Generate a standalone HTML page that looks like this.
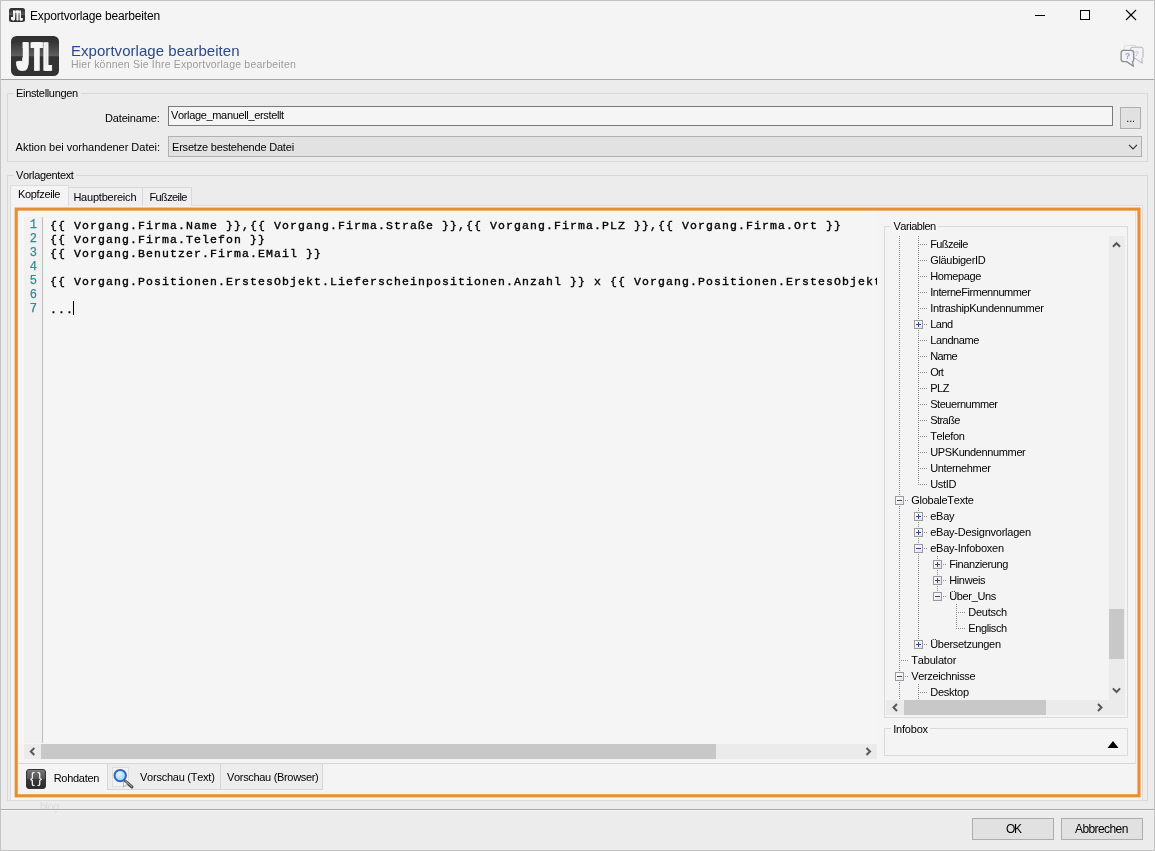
<!DOCTYPE html>
<html lang="de">
<head>
<meta charset="utf-8">
<title>Exportvorlage bearbeiten</title>
<style>
*{box-sizing:border-box;margin:0;padding:0}
html,body{width:1155px;height:851px;overflow:hidden}
body{position:relative;font-kerning:none;background:#ececec;font-family:"Liberation Sans",sans-serif;font-size:11px;color:#000;line-height:1}
div,span,svg{position:absolute}
#root{left:0;top:0;width:1155px;height:851px;will-change:transform}
#win{left:0;top:0;width:1155px;height:851px;border:1px solid #c3c3c3;z-index:50}
#head{left:0;top:0;width:1155px;height:79px;background:#f4f4f4}
#headline{left:0;top:79px;width:1154px;height:1px;background:#a6a6a6}
#title{left:30px;top:9px;font-size:12px;line-height:14px;white-space:nowrap;letter-spacing:-0.17px}
#h1{left:71px;top:42px;font-size:15px;line-height:17px;color:#2c4a8c;white-space:nowrap;letter-spacing:0.04px}
#h2{left:71px;top:58px;font-size:10.5px;line-height:12px;color:#9c9c9c;white-space:nowrap;letter-spacing:0.2px}
.t{white-space:nowrap;line-height:13px;font-size:11px;letter-spacing:-0.1px}
.gb{border:1px solid #d8d8d8}
.gbl{background:#ececec;padding:0 1px;white-space:nowrap;line-height:13px;letter-spacing:-0.1px}
.ln{font-family:"Liberation Mono",monospace;font-size:12px;line-height:14px;color:#2b8f93;-webkit-text-stroke:0.25px #2b8f93;text-align:right;white-space:pre}
.cd{font-family:"Liberation Mono",monospace;font-size:11.5px;letter-spacing:1.1px;line-height:14px;color:#000;white-space:pre;-webkit-text-stroke:0.35px #000}
.vd{width:1px;background:repeating-linear-gradient(to bottom,#8c8c8c 0 1px,transparent 1px 2px)}
.hd{height:1px;background:repeating-linear-gradient(to right,#8c8c8c 0 1px,transparent 1px 2px)}
.bx{width:9px;height:9px;border:1px solid #9b9b9b;background:linear-gradient(135deg,#fff,#e4e4e4)}
.bx i{position:absolute;background:#33478f}
.bh{left:1px;top:3px;width:5px;height:1px}
.bv{left:3px;top:1px;width:1px;height:5px}
.btn{background:#e1e1e1;border:1px solid #adadad;text-align:center;white-space:nowrap}
</style>
</head>
<body>
<div id="root">
<div id="head"></div><div id="headline"></div>
<div id="title">Exportvorlage bearbeiten</div>
<div id="h1">Exportvorlage bearbeiten</div>
<div id="h2">Hier können Sie Ihre Exportvorlage bearbeiten</div>
<svg style="left:11px;top:36px" width="48" height="40" viewBox="0 0 48 40">
<defs><linearGradient id="ag" x1="0" y1="0" x2="0" y2="1"><stop offset="0" stop-color="#2f2f2f"/><stop offset="0.15" stop-color="#343434"/><stop offset="0.49" stop-color="#5e5e5e"/><stop offset="0.52" stop-color="#333333"/><stop offset="1" stop-color="#323232"/></linearGradient><clipPath id="jc1"><path d="M11.8 0H48V40H0V21.5H11.8z"/></clipPath></defs>
<rect x="0" y="0" width="48" height="40" rx="5.5" ry="5.5" fill="url(#ag)"/>
<g clip-path="url(#jc1)">
<text transform="translate(5.11,33.70) scale(0.00940,0.01938)" font-family="Liberation Sans, sans-serif" font-weight="bold" font-size="2048" fill="#f5f5f5" stroke="#f5f5f5" stroke-width="1.0" style="vector-effect:non-scaling-stroke">J</text>
<text transform="translate(6.61,33.70) scale(0.00940,0.01938)" font-family="Liberation Sans, sans-serif" font-weight="bold" font-size="2048" fill="#f5f5f5" stroke="#f5f5f5" stroke-width="1.0" style="vector-effect:non-scaling-stroke">J</text>
<text transform="translate(8.11,33.70) scale(0.00940,0.01938)" font-family="Liberation Sans, sans-serif" font-weight="bold" font-size="2048" fill="#f5f5f5" stroke="#f5f5f5" stroke-width="1.0" style="vector-effect:non-scaling-stroke">J</text>
</g>
<text transform="translate(19.63,33.70) scale(0.00730,0.01938)" font-family="Liberation Sans, sans-serif" font-weight="bold" font-size="2048" fill="#f5f5f5" stroke="#f5f5f5" stroke-width="1.0" style="vector-effect:non-scaling-stroke">T</text>
<text transform="translate(21.13,33.70) scale(0.00730,0.01938)" font-family="Liberation Sans, sans-serif" font-weight="bold" font-size="2048" fill="#f5f5f5" stroke="#f5f5f5" stroke-width="1.0" style="vector-effect:non-scaling-stroke">T</text>
<text transform="translate(22.63,33.70) scale(0.00730,0.01938)" font-family="Liberation Sans, sans-serif" font-weight="bold" font-size="2048" fill="#f5f5f5" stroke="#f5f5f5" stroke-width="1.0" style="vector-effect:non-scaling-stroke">T</text>
<text transform="translate(31.92,33.70) scale(0.00495,0.01938)" font-family="Liberation Sans, sans-serif" font-weight="bold" font-size="2048" fill="#f5f5f5" stroke="#f5f5f5" stroke-width="1.0" style="vector-effect:non-scaling-stroke">L</text>
<text transform="translate(33.42,33.70) scale(0.00495,0.01938)" font-family="Liberation Sans, sans-serif" font-weight="bold" font-size="2048" fill="#f5f5f5" stroke="#f5f5f5" stroke-width="1.0" style="vector-effect:non-scaling-stroke">L</text>
<text transform="translate(34.92,33.70) scale(0.00495,0.01938)" font-family="Liberation Sans, sans-serif" font-weight="bold" font-size="2048" fill="#f5f5f5" stroke="#f5f5f5" stroke-width="1.0" style="vector-effect:non-scaling-stroke">L</text>
</svg>
<svg style="left:9px;top:8px" width="16" height="14" viewBox="0 0 16 14">
<defs><linearGradient id="bg" x1="0" y1="0" x2="0" y2="1"><stop offset="0" stop-color="#2f2f2f"/><stop offset="0.15" stop-color="#343434"/><stop offset="0.49" stop-color="#5e5e5e"/><stop offset="0.52" stop-color="#333333"/><stop offset="1" stop-color="#323232"/></linearGradient><clipPath id="jc2"><path d="M4.2 0H16V14H0V7.5H4.2z"/></clipPath></defs>
<rect x="0" y="0" width="16" height="14" rx="2.5" ry="2.5" fill="url(#bg)"/>
<g clip-path="url(#jc2)">
<text transform="translate(1.89,11.60) scale(0.00351,0.00646)" font-family="Liberation Sans, sans-serif" font-weight="bold" font-size="2048" fill="#f5f5f5" stroke="#f5f5f5" stroke-width="0.4" style="vector-effect:non-scaling-stroke">J</text>
<text transform="translate(2.19,11.60) scale(0.00351,0.00646)" font-family="Liberation Sans, sans-serif" font-weight="bold" font-size="2048" fill="#f5f5f5" stroke="#f5f5f5" stroke-width="0.4" style="vector-effect:non-scaling-stroke">J</text>
<text transform="translate(2.49,11.60) scale(0.00351,0.00646)" font-family="Liberation Sans, sans-serif" font-weight="bold" font-size="2048" fill="#f5f5f5" stroke="#f5f5f5" stroke-width="0.4" style="vector-effect:non-scaling-stroke">J</text>
</g>
<text transform="translate(6.54,11.60) scale(0.00265,0.00646)" font-family="Liberation Sans, sans-serif" font-weight="bold" font-size="2048" fill="#f5f5f5" stroke="#f5f5f5" stroke-width="0.4" style="vector-effect:non-scaling-stroke">T</text>
<text transform="translate(6.84,11.60) scale(0.00265,0.00646)" font-family="Liberation Sans, sans-serif" font-weight="bold" font-size="2048" fill="#f5f5f5" stroke="#f5f5f5" stroke-width="0.4" style="vector-effect:non-scaling-stroke">T</text>
<text transform="translate(7.14,11.60) scale(0.00265,0.00646)" font-family="Liberation Sans, sans-serif" font-weight="bold" font-size="2048" fill="#f5f5f5" stroke="#f5f5f5" stroke-width="0.4" style="vector-effect:non-scaling-stroke">T</text>
<text transform="translate(10.51,11.60) scale(0.00209,0.00646)" font-family="Liberation Sans, sans-serif" font-weight="bold" font-size="2048" fill="#f5f5f5" stroke="#f5f5f5" stroke-width="0.4" style="vector-effect:non-scaling-stroke">L</text>
<text transform="translate(10.81,11.60) scale(0.00209,0.00646)" font-family="Liberation Sans, sans-serif" font-weight="bold" font-size="2048" fill="#f5f5f5" stroke="#f5f5f5" stroke-width="0.4" style="vector-effect:non-scaling-stroke">L</text>
<text transform="translate(11.11,11.60) scale(0.00209,0.00646)" font-family="Liberation Sans, sans-serif" font-weight="bold" font-size="2048" fill="#f5f5f5" stroke="#f5f5f5" stroke-width="0.4" style="vector-effect:non-scaling-stroke">L</text>
</svg>
<svg style="left:1030px;top:5px" width="115" height="22" viewBox="0 0 115 22" fill="none" stroke="#000" stroke-width="1">
<path d="M5 10.5H15"/>
<rect x="50.5" y="5.5" width="9" height="9"/>
<path d="M96 5L106 15M106 5L96 15" stroke-width="1.1"/>
</svg>
<svg style="left:1119px;top:44px" width="26" height="24" viewBox="0 0 26 24">
<path d="M5 6V3.500Q5 1.400 7.200 1.400H15Q17 1.400 17.200 3" fill="#f3f4f6" stroke="#d6d6d6" stroke-width="0.9"/>
<path d="M13.6 3.200H21.800Q24.100 3.200 24.100 5.500V12.300Q24.100 14 22.800 14.200L23.200 19.300L16 14.200H13.600Q11.500 14.200 11.500 12V5.400Q11.500 3.200 13.600 3.200Z" fill="#f1f3f6" stroke="#b4b4b4" stroke-width="1"/>
<path d="M4.500 6.300H12.300Q14.700 6.300 14.700 8.700V15.400Q14.700 17.300 13.500 17.600L14.400 22.300L7.600 17.600H4.500Q2.100 17.600 2.100 15.200V8.700Q2.100 6.300 4.500 6.300Z" fill="#f0f2f5" stroke="#8e8e8e" stroke-width="1.300" stroke-linejoin="round"/>
<text x="8.700" y="14.800" text-anchor="middle" font-family="Liberation Sans, sans-serif" font-size="8.500" font-weight="bold" fill="#8aa2c8">?</text>
<text x="17.700" y="11.600" text-anchor="middle" font-family="Liberation Sans, sans-serif" font-size="8" font-weight="bold" fill="#bccbe0">?</text>
</svg>
<div class="gb" style="left:7px;top:93px;width:1141px;height:69px"></div>
<div class="gbl" style="left:14px;top:87px;width:67px;height:13px"></div>
<div class="t" style="left:16px;top:87px;font-size:11px;line-height:13px;letter-spacing:-0.324px;">Einstellungen</div>
<div class="t" style="left:105px;top:112px;font-size:11px;line-height:13px;letter-spacing:-0.163px;">Dateiname:</div>
<div style="left:168px;top:106px;width:945px;height:20px;background:#f5f5f5;border:1px solid #7a7a7a"></div>
<div class="t" style="left:171px;top:109px;font-size:11px;line-height:13px;letter-spacing:-0.343px;">Vorlage_manuell_erstellt</div>
<div class="btn" style="left:1120px;top:107px;width:21px;height:22px"></div>
<div class="t" style="left:1126.3px;top:112px;font-size:11px;line-height:13px;letter-spacing:-0.147px;">...</div>
<div class="t" style="left:15.6px;top:141px;font-size:11px;line-height:13px;letter-spacing:-0.018px;">Aktion bei vorhandener Datei:</div>
<div style="left:168px;top:136px;width:974px;height:21px;background:#e2e2e2;border:1px solid #b0b0b0"></div>
<div class="t" style="left:172px;top:141px;font-size:11px;line-height:13px;letter-spacing:-0.195px;">Ersetze bestehende Datei</div>
<svg style="left:1127px;top:143px" width="12" height="8" viewBox="0 0 12 8" fill="none" stroke="#333" stroke-width="1.2"><path d="M2 1.800L6 5.800L10 1.800"/></svg>
<div class="gb" style="left:7px;top:175px;width:1141px;height:626px"></div>
<div class="gbl" style="left:14px;top:169px;width:62px;height:13px"></div>
<div class="t" style="left:16px;top:169px;font-size:11px;line-height:13px;letter-spacing:-0.353px;">Vorlagentext</div>
<div style="left:10px;top:205px;width:1133px;height:596px;background:#f4f4f4;border:1px solid #dcdcdc"></div>
<div style="left:68px;top:187px;width:75px;height:19px;background:#efefef;border:1px solid #d9d9d9;border-bottom:none"></div>
<div style="left:142px;top:187px;width:50px;height:19px;background:#efefef;border:1px solid #d9d9d9;border-bottom:none"></div>
<div style="left:10px;top:185px;width:59px;height:21px;background:#f4f4f4;border:1px solid #dcdcdc;border-bottom:none"></div>
<div class="t" style="left:18px;top:188px;font-size:11px;line-height:13px;letter-spacing:-0.347px;">Kopfzeile</div>
<div class="t" style="left:73.4px;top:191px;font-size:11px;line-height:13px;letter-spacing:-0.211px;">Hauptbereich</div>
<div class="t" style="left:149.4px;top:191px;font-size:11px;line-height:13px;letter-spacing:-0.597px;">Fußzeile</div>
<svg style="left:10px;top:203px" width="1136" height="600" viewBox="10 203 1136 600" fill="none"><rect x="16.2" y="209.1" width="1122.8" height="586.7" stroke="#fdf0e1" stroke-width="5"/><rect x="16.2" y="209.1" width="1122.8" height="586.7" stroke="#e78d35" stroke-width="3.1"/></svg>
<div style="left:18px;top:211px;width:859px;height:533px;overflow:hidden;background:#f5f5f5">
<div style="left:6px;top:6px;width:18px;height:526px;background:#f1f1f1"></div>
<div style="left:24px;top:6px;width:1px;height:526px;background:#bdbdbd"></div>
<div class="ln" style="left:0;top:7px;width:19px">1</div><div class="cd" style="left:32px;top:8px">{{ Vorgang.Firma.Name }},{{ Vorgang.Firma.Straße }},{{ Vorgang.Firma.PLZ }},{{ Vorgang.Firma.Ort }}</div>
<div class="ln" style="left:0;top:21px;width:19px">2</div><div class="cd" style="left:32px;top:22px">{{ Vorgang.Firma.Telefon }}</div>
<div class="ln" style="left:0;top:35px;width:19px">3</div><div class="cd" style="left:32px;top:36px">{{ Vorgang.Benutzer.Firma.EMail }}</div>
<div class="ln" style="left:0;top:49px;width:19px">4</div>
<div class="ln" style="left:0;top:63px;width:19px">5</div><div class="cd" style="left:32px;top:64px">{{ Vorgang.Positionen.ErstesObjekt.Lieferscheinpositionen.Anzahl }} x {{ Vorgang.Positionen.ErstesObjekt.Artikel.Name }}</div>
<div class="ln" style="left:0;top:77px;width:19px">6</div>
<div class="ln" style="left:0;top:91px;width:19px">7</div><div class="cd" style="left:32px;top:92px">...</div>
<div style="left:55px;top:90px;width:1px;height:14px;background:#000"></div>
</div>
<div style="left:24px;top:744px;width:853px;height:15px;background:#ebebeb"></div>
<div style="left:41px;top:744px;width:675px;height:15px;background:#c8c8c8"></div>
<svg style="left:24px;top:744px" width="17" height="15" viewBox="0 0 17 15" fill="none" stroke="#585858" stroke-width="2"><path d="M10.300 4L6.800 7.500L10.300 11"/></svg>
<svg style="left:860px;top:744px" width="17" height="15" viewBox="0 0 17 15" fill="none" stroke="#585858" stroke-width="2"><path d="M6.500 4L10 7.500L6.500 11"/></svg>
<div class="gb" style="left:884px;top:226px;width:244px;height:492px;border-color:#dadada"></div>
<div style="left:891px;top:220px;width:47px;height:13px;background:#f5f5f5"></div>
<div class="t" style="left:893.4px;top:220px;font-size:11px;line-height:13px;letter-spacing:-0.456px;">Variablen</div>
<div style="left:888px;top:236px;width:220px;height:464px;overflow:hidden">
<div class="vd" style="left:11px;top:0px;height:464px"></div><div class="vd" style="left:30px;top:0px;height:249px"></div><div class="vd" style="left:30px;top:272px;height:137px"></div><div class="vd" style="left:30px;top:448px;height:16px"></div><div class="vd" style="left:49px;top:320px;height:41px"></div><div class="vd" style="left:68px;top:368px;height:25px"></div>
<div class="hd" style="left:32px;top:8px;width:7px"></div><div class="t" style="left:42.2px;top:2px;font-size:11px;line-height:13px;letter-spacing:-0.584px;">Fußzeile</div>
<div class="hd" style="left:32px;top:24px;width:7px"></div><div class="t" style="left:42.2px;top:18px;font-size:11px;line-height:13px;letter-spacing:-0.323px;">GläubigerID</div>
<div class="hd" style="left:32px;top:40px;width:7px"></div><div class="t" style="left:42.2px;top:34px;font-size:11px;line-height:13px;letter-spacing:-0.362px;">Homepage</div>
<div class="hd" style="left:32px;top:56px;width:7px"></div><div class="t" style="left:42.2px;top:50px;font-size:11px;line-height:13px;letter-spacing:-0.455px;">InterneFirmennummer</div>
<div class="hd" style="left:32px;top:72px;width:7px"></div><div class="t" style="left:42.2px;top:66px;font-size:11px;line-height:13px;letter-spacing:-0.339px;">IntrashipKundennummer</div>
<div class="hd" style="left:32px;top:88px;width:7px"></div><div class="bx" style="left:26px;top:84px"><i class="bh"></i><i class="bv"></i></div><div class="t" style="left:42.2px;top:82px;font-size:11px;line-height:13px;letter-spacing:-0.506px;">Land</div>
<div class="hd" style="left:32px;top:104px;width:7px"></div><div class="t" style="left:42.2px;top:98px;font-size:11px;line-height:13px;letter-spacing:-0.385px;">Landname</div>
<div class="hd" style="left:32px;top:120px;width:7px"></div><div class="t" style="left:42.2px;top:114px;font-size:11px;line-height:13px;letter-spacing:-0.669px;">Name</div>
<div class="hd" style="left:32px;top:136px;width:7px"></div><div class="t" style="left:42.2px;top:130px;font-size:11px;line-height:13px;letter-spacing:-0.830px;">Ort</div>
<div class="hd" style="left:32px;top:152px;width:7px"></div><div class="t" style="left:42.2px;top:146px;font-size:11px;line-height:13px;letter-spacing:-0.430px;">PLZ</div>
<div class="hd" style="left:32px;top:168px;width:7px"></div><div class="t" style="left:42.2px;top:162px;font-size:11px;line-height:13px;letter-spacing:-0.448px;">Steuernummer</div>
<div class="hd" style="left:32px;top:184px;width:7px"></div><div class="t" style="left:42.2px;top:178px;font-size:11px;line-height:13px;letter-spacing:-0.547px;">Straße</div>
<div class="hd" style="left:32px;top:200px;width:7px"></div><div class="t" style="left:42.2px;top:194px;font-size:11px;line-height:13px;letter-spacing:-0.352px;">Telefon</div>
<div class="hd" style="left:32px;top:216px;width:7px"></div><div class="t" style="left:42.2px;top:210px;font-size:11px;line-height:13px;letter-spacing:-0.378px;">UPSKundennummer</div>
<div class="hd" style="left:32px;top:232px;width:7px"></div><div class="t" style="left:42.2px;top:226px;font-size:11px;line-height:13px;letter-spacing:-0.352px;">Unternehmer</div>
<div class="hd" style="left:32px;top:248px;width:7px"></div><div class="t" style="left:42.2px;top:242px;font-size:11px;line-height:13px;letter-spacing:-0.333px;">UstID</div>
<div class="hd" style="left:13px;top:264px;width:7px"></div><div class="bx" style="left:7px;top:260px"><i class="bh"></i></div><div class="t" style="left:23.2px;top:258px;font-size:11px;line-height:13px;letter-spacing:-0.254px;">GlobaleTexte</div>
<div class="hd" style="left:32px;top:280px;width:7px"></div><div class="bx" style="left:26px;top:276px"><i class="bh"></i><i class="bv"></i></div><div class="t" style="left:42.2px;top:274px;font-size:11px;line-height:13px;letter-spacing:-0.221px;">eBay</div>
<div class="hd" style="left:32px;top:296px;width:7px"></div><div class="bx" style="left:26px;top:292px"><i class="bh"></i><i class="bv"></i></div><div class="t" style="left:42.2px;top:290px;font-size:11px;line-height:13px;letter-spacing:-0.242px;">eBay-Designvorlagen</div>
<div class="hd" style="left:32px;top:312px;width:7px"></div><div class="bx" style="left:26px;top:308px"><i class="bh"></i></div><div class="t" style="left:42.2px;top:306px;font-size:11px;line-height:13px;letter-spacing:-0.248px;">eBay-Infoboxen</div>
<div class="hd" style="left:51px;top:328px;width:7px"></div><div class="bx" style="left:45px;top:324px"><i class="bh"></i><i class="bv"></i></div><div class="t" style="left:61.2px;top:322px;font-size:11px;line-height:13px;letter-spacing:-0.408px;">Finanzierung</div>
<div class="hd" style="left:51px;top:344px;width:7px"></div><div class="bx" style="left:45px;top:340px"><i class="bh"></i><i class="bv"></i></div><div class="t" style="left:61.2px;top:338px;font-size:11px;line-height:13px;letter-spacing:-0.355px;">Hinweis</div>
<div class="hd" style="left:51px;top:360px;width:7px"></div><div class="bx" style="left:45px;top:356px"><i class="bh"></i></div><div class="t" style="left:61.2px;top:354px;font-size:11px;line-height:13px;letter-spacing:-0.336px;">Über_Uns</div>
<div class="hd" style="left:70px;top:376px;width:7px"></div><div class="t" style="left:80.2px;top:370px;font-size:11px;line-height:13px;letter-spacing:-0.239px;">Deutsch</div>
<div class="hd" style="left:70px;top:392px;width:7px"></div><div class="t" style="left:80.2px;top:386px;font-size:11px;line-height:13px;letter-spacing:-0.370px;">Englisch</div>
<div class="hd" style="left:32px;top:408px;width:7px"></div><div class="bx" style="left:26px;top:404px"><i class="bh"></i><i class="bv"></i></div><div class="t" style="left:42.2px;top:402px;font-size:11px;line-height:13px;letter-spacing:-0.312px;">Übersetzungen</div>
<div class="hd" style="left:13px;top:424px;width:7px"></div><div class="t" style="left:23.2px;top:418px;font-size:11px;line-height:13px;letter-spacing:-0.161px;">Tabulator</div>
<div class="hd" style="left:13px;top:440px;width:7px"></div><div class="bx" style="left:7px;top:436px"><i class="bh"></i></div><div class="t" style="left:23.2px;top:434px;font-size:11px;line-height:13px;letter-spacing:-0.342px;">Verzeichnisse</div>
<div class="hd" style="left:32px;top:456px;width:7px"></div><div class="t" style="left:42.2px;top:450px;font-size:11px;line-height:13px;letter-spacing:-0.239px;">Desktop</div>
</div>
<div style="left:1109px;top:236px;width:16px;height:479px;background:#ebebeb"></div>
<div style="left:1109px;top:609px;width:15px;height:50px;background:#c8c8c8"></div>
<svg style="left:1108px;top:236px" width="17" height="17" viewBox="0 0 17 17" fill="none" stroke="#585858" stroke-width="2"><path d="M4.900 10.800L8.500 7.200L12.100 10.800"/></svg>
<svg style="left:1108px;top:682px" width="17" height="17" viewBox="0 0 17 17" fill="none" stroke="#585858" stroke-width="2"><path d="M4.900 6.400L8.500 10L12.100 6.400"/></svg>
<div style="left:886px;top:700px;width:223px;height:15px;background:#ebebeb"></div>
<div style="left:904px;top:700px;width:142px;height:15px;background:#c8c8c8"></div>
<svg style="left:888px;top:700px" width="16" height="15" viewBox="0 0 16 15" fill="none" stroke="#585858" stroke-width="2"><path d="M9 4L5.500 7.500L9 11"/></svg>
<svg style="left:1091px;top:700px" width="17" height="15" viewBox="0 0 17 15" fill="none" stroke="#585858" stroke-width="2"><path d="M7 4L10.500 7.500L7 11"/></svg>
<div class="gb" style="left:884px;top:728px;width:244px;height:28px;border-color:#dadada"></div>
<div style="left:891px;top:722px;width:39px;height:13px;background:#f5f5f5"></div>
<div class="t" style="left:893.2px;top:723px;font-size:11px;line-height:13px;letter-spacing:-0.197px;">Infobox</div>
<svg style="left:1107px;top:740px" width="12" height="9" viewBox="0 0 12 9"><path d="M0.5 8L6 1L11.500 8z" fill="#000"/></svg>
<div style="left:18px;top:763px;width:1118px;height:1px;background:#d6d6d6"></div>
<div style="left:1135px;top:211px;width:1px;height:553px;background:#e4e0de"></div>
<div style="left:107px;top:763px;width:114px;height:27px;background:#ededed;border:1px solid #d6d6d6"></div>
<div style="left:220px;top:763px;width:103px;height:27px;background:#ededed;border:1px solid #d6d6d6"></div>
<div class="t" style="left:53.7px;top:772px;font-size:11px;line-height:13px;letter-spacing:-0.294px;">Rohdaten</div>
<div class="t" style="left:140px;top:771px;font-size:11px;line-height:13px;letter-spacing:-0.245px;">Vorschau (Text)</div>
<div class="t" style="left:227px;top:771px;font-size:11px;line-height:13px;letter-spacing:-0.320px;">Vorschau (Browser)</div>
<svg style="left:26px;top:769px" width="20" height="20" viewBox="0 0 20 20">
<defs><linearGradient id="rg" x1="0" y1="0" x2="0" y2="1"><stop offset="0" stop-color="#8a8a8a"/><stop offset="0.12" stop-color="#6e6e6e"/><stop offset="0.48" stop-color="#555"/><stop offset="0.52" stop-color="#3a3a3a"/><stop offset="1" stop-color="#2a2a2a"/></linearGradient></defs>
<rect x="0.5" y="0.5" width="19" height="19" rx="2.5" fill="url(#rg)" stroke="#333"/>
<text x="6.3" y="14.3" text-anchor="middle" font-family="Liberation Sans, sans-serif" font-size="14.5" fill="#f4f4f4">{</text>
<text x="13.7" y="14.3" text-anchor="middle" font-family="Liberation Sans, sans-serif" font-size="14.5" fill="#f4f4f4">}</text>
</svg>
<svg style="left:111px;top:765px" width="25" height="25" viewBox="0 0 25 25">
<defs><radialGradient id="mg" cx="0.4" cy="0.35" r="0.7"><stop offset="0" stop-color="#dff5fd"/><stop offset="1" stop-color="#8fd2f2"/></radialGradient></defs>
<rect x="1.5" y="2.5" width="16" height="19" fill="#f3f3f3" stroke="#dedede"/>
<path d="M14 16L21 22" stroke="#4f4f4f" stroke-width="3" stroke-linecap="round"/>
<path d="M14 15.600L21 21.600" stroke="#a8a8a8" stroke-width="1" stroke-linecap="round"/>
<circle cx="9.2" cy="10.600" r="5.7" fill="url(#mg)" stroke="#3565bd" stroke-width="2"/>
<path d="M12.5 16.500l0 5.500 4-3z" fill="#f6f6f6" stroke="#909090" stroke-width="0.600"/>
</svg>
<div class="t" style="left:40px;top:800px;font-size:11px;line-height:13px;letter-spacing:-0.513px;color:#dcdcdc;">blog</div>
<div style="left:1px;top:809px;width:1153px;height:1px;background:#a9a9a9"></div>
<div style="left:1px;top:810px;width:1153px;height:1px;background:#f6f6f6"></div>
<div class="btn" style="left:972px;top:818px;width:82px;height:22px"></div>
<div class="btn" style="left:1061px;top:818px;width:82px;height:22px"></div>
<div class="t" style="left:1006px;top:823px;font-size:12px;line-height:13px;letter-spacing:-1.225px;">OK</div>
<div class="t" style="left:1075px;top:823px;font-size:12px;line-height:13px;letter-spacing:-0.593px;">Abbrechen</div>
<div id="win"></div>
</div>
</body>
</html>
